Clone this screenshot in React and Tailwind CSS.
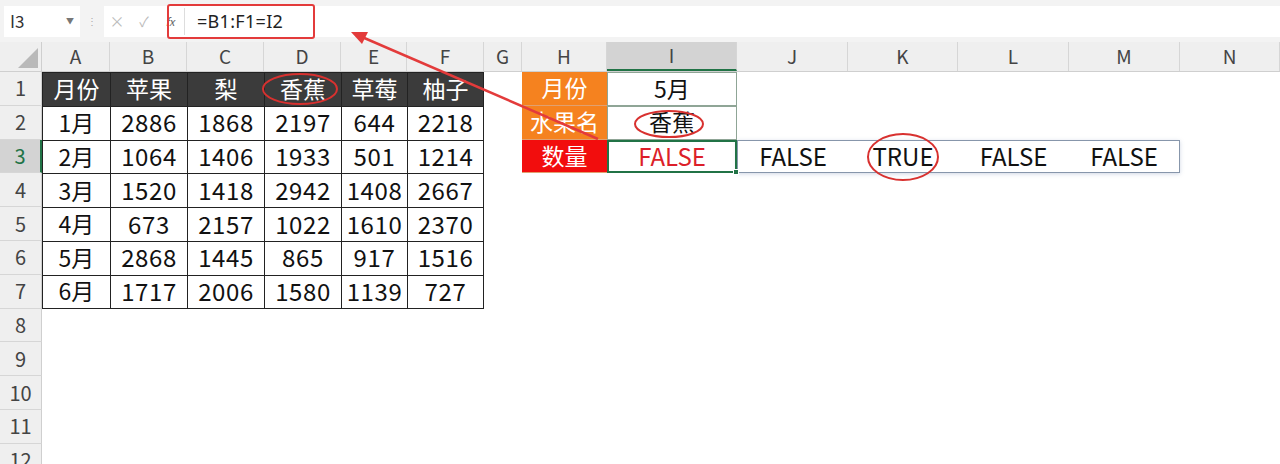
import React from 'react';

const cols = [
  { k: 'A', w: 68 }, { k: 'B', w: 77 }, { k: 'C', w: 77 }, { k: 'D', w: 77 },
  { k: 'E', w: 66 }, { k: 'F', w: 77 }, { k: 'G', w: 38 }, { k: 'H', w: 85 },
  { k: 'I', w: 130 }, { k: 'J', w: 111 }, { k: 'K', w: 110 }, { k: 'L', w: 111 },
  { k: 'M', w: 111 }, { k: 'N', w: 100 },
];

const data = [
  ['月份', '苹果', '梨', '香蕉', '草莓', '柚子'],
  ['1月', 2886, 1868, 2197, 644, 2218],
  ['2月', 1064, 1406, 1933, 501, 1214],
  ['3月', 1520, 1418, 2942, 1408, 2667],
  ['4月', 673, 2157, 1022, 1610, 2370],
  ['5月', 2868, 1445, 865, 917, 1516],
  ['6月', 1717, 2006, 1580, 1139, 727],
];

const side = [
  ['月份', '5月', 'bg-[#f5821f]'],
  ['水果名', '香蕉', 'bg-[#f5821f]'],
  ['数量', 'FALSE', 'bg-[#f20d0d]'],
];

const w = (n) => ({ width: n });

function FormulaBar() {
  return (
    <div className="h-[42px] bg-[#f3f3f3] flex items-center pl-[4px] gap-0">
      <div className="w-[76px] h-[31px] bg-white flex items-center justify-between px-[6px]">
        <span className="text-[17px] text-[#333]">I3</span>
        <span className="text-[8px] text-[#777]">▼</span>
      </div>
      <div className="w-[24px] flex justify-center text-[10px] text-[#aaa] leading-none">⋮</div>
      <div className="flex-1 h-[31px] bg-white flex items-center">
        <span className="w-[26px] text-center text-[15px] text-[#bbb]">×</span>
        <span className="w-[28px] text-center text-[14px] text-[#bbb]">✓</span>
        <span className="w-[24px] text-center text-[11px] italic text-[#666]">fx</span>
        <div className="h-[27px] border-l border-[#ddd] ml-[2px] pl-[12px] flex items-center">
          <span className="text-[18px] tracking-[0.3px] text-[#222] font-['Noto_Sans',sans-serif]">=B1:F1=I2</span>
        </div>
      </div>
    </div>
  );
}

function ColumnHeader() {
  return (
    <div className="flex h-[30px] bg-[#efefef] border-b border-[#cfcfcf]">
      <div className="w-[42px] h-full border-r border-[#cfcfcf] relative">
        <svg className="absolute left-[18px] top-[6px]" width="20" height="20">
          <polygon points="20,0 20,20 0,20" fill="#b9b9b9" />
        </svg>
      </div>
      {cols.map((c) => (
        <div
          key={c.k}
          style={w(c.w)}
          className={`h-full flex items-center justify-center text-[19px] text-[#444] border-r border-[#d6d6d6] ${c.k === 'I' ? 'bg-[#d3d3d3] border-b-2 border-b-[#217346]' : ''}`}
        >
          {c.k}
        </div>
      ))}
    </div>
  );
}

function RowHead({ n, active }) {
  return (
    <div
      className={`w-[42px] shrink-0 h-full flex items-center justify-center text-[20px] border-b border-[#d6d6d6] ${active ? 'bg-[#d3d3d3] text-[#217346] border-r-2 border-r-[#217346]' : 'bg-[#efefef] text-[#444] border-r border-r-[#cfcfcf]'}`}
    >
      {n}
    </div>
  );
}

function Row({ i }) {
  const r = data[i];
  const head = i === 0;
  const last = i === data.length - 1;
  const s = i < 3 ? side[i] : null;
  return (
    <div className="flex h-[33.8px]">
      <RowHead n={i + 1} active={i === 2} />
      {r.map((v, j) => (
        <div
          key={j}
          style={w(cols[j].w)}
          className={`h-full flex items-center justify-center pb-[2px] border-l border-t border-[#222] ${typeof v === 'number' ? 'text-[24px] tracking-[0.6px]' : 'text-[23px]'} ${j === 5 ? 'border-r' : ''} ${last ? 'border-b' : ''} ${head ? 'bg-[#3b3b3b] text-white' : 'text-[#111]'}`}
        >
          {v}
        </div>
      ))}
      <div style={w(38)} />
      {s && (
        <>
          <div
            style={w(85)}
            className={`h-full flex items-center justify-center pb-[2px] text-[23px] text-white border-b border-[#e0a070] ${s[2]}`}
          >
            {s[0]}
          </div>
          <div
            style={w(130)}
            className={`h-full flex items-center justify-center pb-[2px] relative ${i === 2 ? 'border-2 border-[#217346] text-[#dc1f2a] text-[24px]' : 'border border-[#8fa596] text-[#111] text-[23px]'}`}
          >
            {s[1]}
            {i === 2 && <div className="absolute -right-[4px] -bottom-[4px] w-[6px] h-[6px] bg-[#217346] border border-white" />}
          </div>
          {i === 2 && (
            <div className="flex h-full border border-[#8796ab] shadow-[0_1px_4px_rgba(120,140,180,0.35)]">
              {['FALSE', 'TRUE', 'FALSE', 'FALSE'].map((t, k) => (
                <div
                  key={k}
                  style={w([110, 110, 111, 110][k])}
                  className="h-full flex items-center justify-center pb-[2px] text-[24px] text-[#111]"
                >
                  {t}
                </div>
              ))}
            </div>
          )}
        </>
      )}
    </div>
  );
}

function EmptyRow({ n }) {
  return (
    <div className="flex h-[33.8px]">
      <RowHead n={n} />
    </div>
  );
}

function Marks() {
  return (
    <svg className="absolute inset-0 pointer-events-none" width="1280" height="464">
      <rect x="168" y="5" width="146" height="33" rx="2" fill="none" stroke="#e33b3b" strokeWidth="2" />
      <ellipse cx="300" cy="89" rx="37" ry="15" fill="none" stroke="#d8312f" strokeWidth="2" />
      <ellipse cx="669" cy="124" rx="34" ry="13" fill="none" stroke="#d8312f" strokeWidth="2" />
      <ellipse cx="903" cy="157" rx="35" ry="23" fill="none" stroke="#d8312f" strokeWidth="2" />
      <line x1="598" y1="139" x2="362" y2="37" stroke="#e33b3b" strokeWidth="2.5" />
      <polygon points="351,32 368,32 362,44" fill="#e33b3b" />
    </svg>
  );
}

export default function App() {
  return (
    <div className="w-[1280px] h-[464px] overflow-hidden bg-white relative font-['Noto_Sans_CJK_SC','Noto_Sans',sans-serif]">
      <FormulaBar />
      <ColumnHeader />
      {data.map((_, i) => (
        <Row key={i} i={i} />
      ))}
      {[8, 9, 10, 11, 12].map((n) => (
        <EmptyRow key={n} n={n} />
      ))}
      <Marks />
    </div>
  );
}
